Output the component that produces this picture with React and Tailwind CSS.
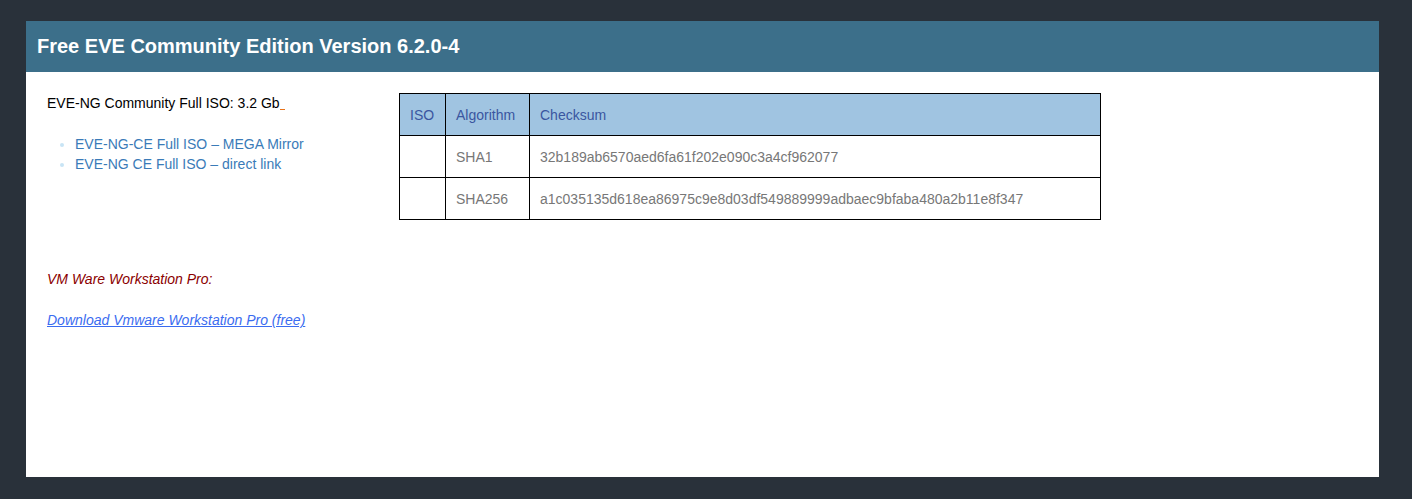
export default function App() {
  const rows = [
    { algo: "SHA1", sum: "32b189ab6570aed6fa61f202e090c3a4cf962077" },
    { algo: "SHA256", sum: "a1c035135d618ea86975c9e8d03df549889999adbaec9bfaba480a2b11e8f347" },
  ];
  return (
    <div
      className="h-[499px] bg-[#29313a] pl-[26px] pr-[33px] pt-[21px] pb-[22px]"
      style={{ fontFamily: '"Liberation Sans", Arial, sans-serif' }}
    >
      <div className="flex h-full flex-col bg-white">
        <div className="flex h-[51px] items-center bg-[#3c6f8a] px-[11px] pb-[2px]">
          <h1 className="text-[20px] font-bold leading-none text-white">
            Free EVE Community Edition Version 6.2.0-4
          </h1>
        </div>
        <div className="px-[21px] pt-[21px] text-[14px] leading-[20px]">
          <div className="flex items-start">
            <div className="w-[352px]">
              <p className="text-black">
                EVE-NG Community Full ISO: 3.2 Gb
                <span className="inline-block h-[1px] w-[5px] bg-[#e8731a] align-[-2px]"></span>
              </p>
              <ul className="mt-[21px] list-disc pl-[28px] marker:text-[#c8e4f5]">
                <li className="text-[#3a7bb8]">EVE-NG-CE Full ISO – MEGA Mirror</li>
                <li className="text-[#3a7bb8]">EVE-NG CE Full ISO – direct link</li>
              </ul>
            </div>
            <table className="w-[702px] border-collapse border border-black">
              <thead>
                <tr className="h-[42px] bg-[#a0c4e1] text-left text-[#3a56a0]">
                  <th className="w-[46px] border border-black px-[10px] font-normal">ISO</th>
                  <th className="w-[84px] border border-black px-[10px] font-normal">Algorithm</th>
                  <th className="border border-black px-[10px] font-normal">Checksum</th>
                </tr>
              </thead>
              <tbody>
                {rows.map((r) => (
                  <tr key={r.algo} className="h-[42px] text-[#777777]">
                    <td className="border border-black px-[10px]"></td>
                    <td className="border border-black px-[10px]">{r.algo}</td>
                    <td className="border border-black px-[10px]">{r.sum}</td>
                  </tr>
                ))}
              </tbody>
            </table>
          </div>
          <p className="mt-[49px] italic text-[#8b0000]">VM Ware Workstation Pro:</p>
          <p className="mt-[21px] italic text-[#3b6cf0] underline">
            Download Vmware Workstation Pro (free)
          </p>
        </div>
      </div>
    </div>
  );
}
